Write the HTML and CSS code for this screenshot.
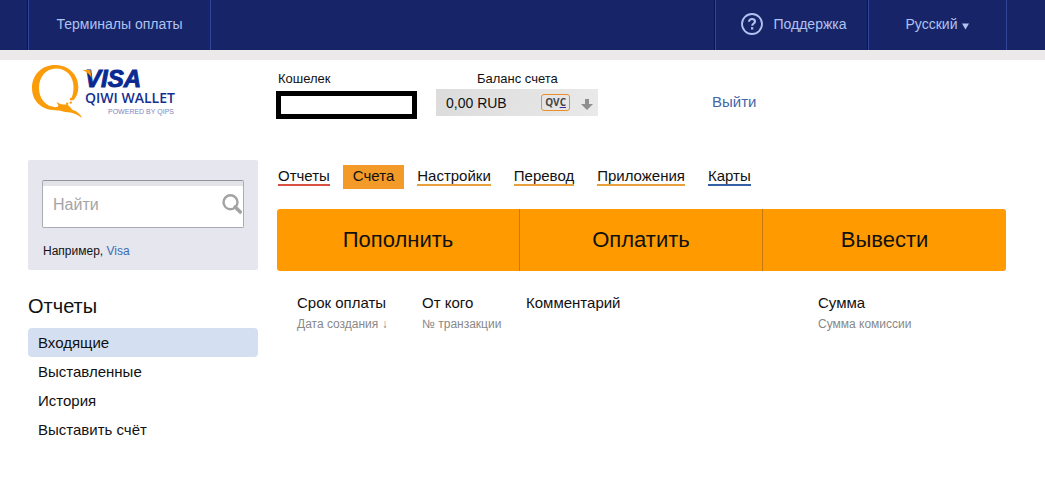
FILE: index.html
```html
<!DOCTYPE html>
<html lang="ru">
<head>
<meta charset="utf-8">
<meta name="viewport" content="width=device-width, initial-scale=1">
<title>Visa QIWI Wallet</title>
<link rel="stylesheet" href="styles.css">
</head>
<body>
<div class="topbar">
  <a class="topbar-item terminals" href="#">Терминалы оплаты</a>
  <a class="topbar-item support" href="#">
    <svg class="help-icon" viewBox="0 0 22 22" aria-hidden="true">
      <circle cx="11" cy="11" r="10" fill="none" stroke="currentColor" stroke-width="1.8"/>
      <path d="M8 8.8C8 6.9 9.3 6 11 6s3 1 3 2.6c0 1.900-2.800 2-2.800 4.200" fill="none" stroke="currentColor" stroke-width="2.100"/>
      <rect x="10" y="14.200" width="2.300" height="2.300" fill="currentColor"/>
    </svg>
    <span>Поддержка</span>
  </a>
  <button class="topbar-item language" type="button">
    <span>Русский</span>
    <svg class="caret" viewBox="0 0 7 7" aria-hidden="true"><path d="M0 0.500h7L3.500 6.500z" fill="currentColor"/></svg>
  </button>
</div>

<header class="header">
  <a class="logo" href="#" aria-label="Visa QIWI Wallet">
    <svg class="logo-image" viewBox="0 0 150 56" aria-hidden="true">
      <path fill="#fb9d0b" fill-rule="evenodd" d="M27 1C40 1 50.300 10 50.300 23c0 6-1.800 10-5 13.500l-2.300-1.500c1.700-3 2.500-7 2.500-12C45.500 12 38 4.600 28 4.600 18 4.600 11 13 11 24c0 10.500 6.500 18.500 16.500 19.200 1.500 0 2.500-.6 3-1.400L28.500 38l4.500 2.300 6.500.4 3.300 3.100 1.400 1.900c5 1.300 8.300 4.500 9.800 8.300-5-4-9.500-5.900-16.500-6.100-3.500-.6-6-1.700-10-1.700C13 46 4 36.500 4 24 4 10.500 14 1 27 1z"/>
      <circle cx="39.200" cy="39.800" r="1.200" fill="#fb9d0b"/>
      <circle cx="42.800" cy="38.600" r="1.200" fill="#fb9d0b"/>
      <circle cx="43.200" cy="35.200" r="1.400" fill="#fb9d0b"/>
      <text class="logo-visa" x="57" y="23">VISA</text>
      <path d="M54 6h8.500l1 8C61.500 9.500 58 7.500 54 6z" fill="#fb9d0b"/>
      <text class="logo-wallet" x="57" y="39">QIWI WALLET</text>
      <text class="logo-powered" x="80" y="50">POWERED BY QIPS</text>
    </svg>
  </a>
  <div class="account">
    <label class="account-label" for="wallet">Кошелек</label>
    <input class="wallet-input" id="wallet" type="text">
  </div>
  <div class="balance">
    <span class="balance-label">Баланс счета</span>
    <button class="balance-button" type="button">
      <span class="balance-value">0,00 RUB</span>
      <span class="qvc">QV<span class="qvc-c">C</span></span>
      <svg class="arrow" viewBox="0 0 12 11" aria-hidden="true"><path d="M4 0h4v5h4L6 11 0 5h4z" fill="#8f8f8f"/></svg>
    </button>
  </div>
  <a class="logout" href="#">Выйти</a>
</header>

<div class="page">
  <aside class="sidebar">
    <form class="search">
      <div class="search-box">
        <input class="search-input" type="search" placeholder="Найти" aria-label="Найти">
        <button class="search-button" type="button" aria-label="Искать">
          <svg class="search-icon" viewBox="0 0 20 20" aria-hidden="true"><circle cx="8.500" cy="8.300" r="7" fill="none" stroke="#a3a3a3" stroke-width="2.400"/><path d="M13.200 13l5 5" stroke="#a3a3a3" stroke-width="3.600" stroke-linecap="round"/></svg>
        </button>
      </div>
      <p class="hint">Например, <a class="hint-link" href="#">Visa</a></p>
    </form>
    <h2 class="side-title">Отчеты</h2>
    <nav class="side-nav">
      <a class="side-link current" href="#">Входящие</a>
      <a class="side-link" href="#">Выставленные</a>
      <a class="side-link" href="#">История</a>
      <a class="side-link" href="#">Выставить счёт</a>
    </nav>
  </aside>
  <main class="main">
    <nav class="tabs">
      <a class="tab red" href="#">Отчеты</a>
      <a class="tab active" href="#">Счета</a>
      <a class="tab" href="#">Настройки</a>
      <a class="tab" href="#">Перевод</a>
      <a class="tab" href="#">Приложения</a>
      <a class="tab blue" href="#">Карты</a>
    </nav>
    <div class="actions">
      <button class="action" type="button">Пополнить</button>
      <button class="action" type="button">Оплатить</button>
      <button class="action" type="button">Вывести</button>
    </div>
    <table class="bills">
      <thead>
        <tr>
          <th class="col-date" scope="col">Срок оплаты<span class="sub">Дата создания ↓</span></th>
          <th class="col-from" scope="col">От кого<span class="sub">№ транзакции</span></th>
          <th class="col-comment" scope="col">Комментарий</th>
          <th class="col-sum" scope="col">Сумма<span class="sub">Сумма комиссии</span></th>
        </tr>
      </thead>
    </table>
  </main>
</div>
</body>
</html>
```

FILE: styles.css
```css
* { box-sizing: border-box; }

body {
  margin: 0;
  background: #fff;
  color: #111;
  font: 15px/20px "Liberation Sans", Arial, sans-serif;
}

a { color: inherit; text-decoration: none; }
button, input { font: inherit; color: inherit; }
button { margin: 0; padding: 0; border: 0; background: none; cursor: pointer; }

/* Top bar */
.topbar {
  display: flex;
  height: 60px;
  padding: 0 38px 0 28px;
  background: #172568;
  border-bottom: 10px solid #ebe9ea;
  color: #b0c2f0;
  font-size: 14px;
}
.topbar-item {
  display: flex;
  align-items: center;
  justify-content: center;
  padding-bottom: 2px;
  border-left: 1px solid #33469a;
  box-shadow: -1px 0 #0b1455;
}
.terminals {
  width: 183px;
  border-right: 1px solid #33469a;
}
.support {
  width: 153px;
  margin-left: auto;
  padding-left: 4px;
  gap: 10px;
}
.language {
  width: 139px;
  gap: 5px;
  border-right: 1px solid #33469a;
}
.help-icon { width: 22px; height: 22px; }
.caret { width: 7px; height: 7px; margin-top: 4px; }

/* Header */
.header {
  display: flex;
  height: 100px;
  padding: 4px 39px 0 28px;
}
.logo { width: 248px; }
.logo-image { display: block; overflow: visible; width: 150px; height: 56px; }
.logo-visa {
  font: italic bold 24px "Liberation Sans", Arial, sans-serif;
  fill: #0a2a92;
  stroke: #0a2a92;
  stroke-width: 1px;
}
.logo-wallet { font: 600 14px "Open Sans", sans-serif; fill: #14308f; }
.logo-powered { font: 7px "Liberation Sans", Arial, sans-serif; fill: #8186bb; }
.account {
  display: flex;
  flex-direction: column;
  width: 160px;
}
.account-label, .balance-label {
  padding: 5px 2px 0;
  font-size: 13px;
}
.wallet-input {
  width: 141px;
  height: 28px;
  margin-top: 2px;
  padding: 0 6px;
  border: 5px solid #000;
  border-radius: 0;
  background: #fff;
}
.balance {
  display: flex;
  flex-direction: column;
  width: 276px;
}
.balance-label { padding-left: 41px; }
.balance-button {
  display: flex;
  align-items: center;
  width: 162px;
  height: 27px;
  padding: 0 5px 0 10px;
  background: linear-gradient(100deg, #dcdcdc, #e9e9e9);
  font-size: 14px;
}
.qvc {
  height: 17px;
  margin-left: auto;
  padding: 0 3px;
  border: 1px solid #e98f2c;
  border-radius: 3px;
  color: #444;
  font: bold 10px/15px "Open Sans", sans-serif;
}
.qvc-c { text-decoration: underline #3a2fa0; }
.arrow { width: 12px; height: 11px; margin: 4px 0 0 11px; }
.logout { padding-top: 28px; color: #4467a8; }

/* Columns */
.page {
  display: flex;
  gap: 19px;
  padding: 0 39px 32px 28px;
}
.sidebar { flex: none; width: 230px; }
.main { flex: 1; min-width: 0; }

/* Search */
.search {
  padding: 20px 14px 9px;
  border-radius: 2px;
  background: #e6e6ef;
}
.search-box {
  display: flex;
  align-items: center;
  height: 48px;
  border: 1px solid #a9acb4;
  border-top-color: #8f939c;
  border-radius: 2px;
  background: #fff;
  box-shadow: inset 0 5px #e2e3e7;
}
.search-input {
  flex: 1;
  min-width: 0;
  padding: 2px 10px 0;
  border: 0;
  background: none;
  font-size: 16px;
}
.search-input::placeholder { color: #a5a5a5; opacity: 1; }
.search-button { padding-right: 1px; }
.search-icon { display: block; width: 20px; height: 20px; }
.hint { margin: 13px 1px 0; font-size: 12px; }
.hint-link { color: #3c6cb0; }

/* Side menu */
.side-title {
  margin: 24px 0 10px;
  font-size: 20px;
  font-weight: normal;
  line-height: 24px;
}
.side-nav { display: grid; }
.side-link { padding: 5px 10px 4px; border-radius: 4px; }
.current { background: #d4e0f2; }

/* Tabs */
.tabs { display: flex; gap: 23px; padding: 5px 1px 20px; }
.tab {
  height: 21px;
  padding-top: 1px;
  border-bottom: 2px solid #e8a03c;
}
.red { border-color: #d85040; }
.blue { border-color: #3560a4; }
.active {
  height: 24px;
  margin: 0 -10px;
  padding: 1px 10px 0;
  border: 0;
  background: #f49a28;
}

/* Actions */
.actions {
  display: grid;
  grid-template-columns: repeat(3, 1fr);
  border-radius: 3px;
  background: #ff9a00;
}
.action { height: 62px; font-size: 22px; line-height: 28px; }
.action:not(:last-child) { border-right: 1px solid #c47a10; }

/* Bills */
.bills {
  width: 100%;
  margin-top: 22px;
  padding-left: 20px;
  border-spacing: 0;
  table-layout: fixed;
}
.bills th {
  padding: 0;
  font-weight: normal;
  text-align: left;
  vertical-align: top;
  white-space: nowrap;
}
.col-date { width: 125px; }
.col-from { width: 104px; }
.col-sum { width: 188px; }
.sub { display: block; color: #888; font-size: 12px; line-height: 22px; }
```
